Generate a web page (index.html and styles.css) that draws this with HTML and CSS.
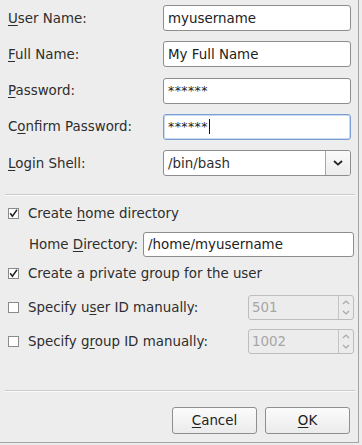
FILE: index.html
```html
<!DOCTYPE html>
<html lang="en">
<head>
	<meta charset="UTF-8">
	<title>Add User</title>
	<link rel="stylesheet" href="styles.css">
</head>
<body>
	<div class="dialog">
		<div class="fields">
			<label class="lbl"><u>U</u>ser Name:</label>
			<div class="entry">myusername</div>
			<label class="lbl"><u>F</u>ull Name:</label>
			<div class="entry">My Full Name</div>
			<label class="lbl"><u>P</u>assword:</label>
			<div class="entry pw">******</div>
			<label class="lbl">C<u>o</u>nfirm Password:</label>
			<div class="entry pw focus">******<span class="caret"></span></div>
			<label class="lbl"><u>L</u>ogin Shell:</label>
			<div class="combo">
				<span class="combo-text">/bin/bash</span>
				<span class="combo-btn">
					<svg width="10" height="6" viewBox="0 0 10 6"><path d="M1 1 L5 4.6 L9 1" fill="none" stroke="#222" stroke-width="1.8"/></svg>
				</span>
			</div>
		</div>

		<div class="sep"></div>

		<div class="options">
			<div class="check-row first">
				<span class="check"><svg width="11" height="11" viewBox="0 0 11 11"><path d="M2.2 5.2 L4.4 8.2 L9 1.8" fill="none" stroke="#222" stroke-width="1.5"/></svg></span>
				<span>Create <u>h</u>ome directory</span>
			</div>
			<div class="home-row">
				<span class="home-lbl">Home <u>D</u>irectory:</span>
				<div class="entry">/home/myusername</div>
			</div>
			<div class="check-row group">
				<span class="check"><svg width="11" height="11" viewBox="0 0 11 11"><path d="M2.2 5.2 L4.4 8.2 L9 1.8" fill="none" stroke="#222" stroke-width="1.5"/></svg></span>
				<span>Create a private <u>g</u>roup for the user</span>
			</div>
			<div class="spin-row uid">
				<div class="check-row">
					<span class="check"></span>
					<span>Specify u<u>s</u>er ID manually:</span>
				</div>
				<div class="spin">
					<span class="spin-text">501</span>
					<span class="spin-btns">
						<svg width="8" height="5" viewBox="0 0 8 5"><path d="M1 4 L4 1 L7 4" fill="none" stroke="#a8a8a8" stroke-width="1.2"/></svg>
						<svg width="8" height="5" viewBox="0 0 8 5"><path d="M1 1 L4 4 L7 1" fill="none" stroke="#a8a8a8" stroke-width="1.2"/></svg>
					</span>
				</div>
			</div>
			<div class="spin-row gid">
				<div class="check-row">
					<span class="check"></span>
					<span>Specify g<u>r</u>oup ID manually:</span>
				</div>
				<div class="spin">
					<span class="spin-text">1002</span>
					<span class="spin-btns">
						<svg width="8" height="5" viewBox="0 0 8 5"><path d="M1 4 L4 1 L7 4" fill="none" stroke="#a8a8a8" stroke-width="1.2"/></svg>
						<svg width="8" height="5" viewBox="0 0 8 5"><path d="M1 1 L4 4 L7 1" fill="none" stroke="#a8a8a8" stroke-width="1.2"/></svg>
					</span>
				</div>
			</div>
		</div>

		<div class="sep low"></div>

		<div class="buttons">
			<button class="btn"><u>C</u>ancel</button>
			<button class="btn"><u>O</u>K</button>
		</div>
	</div>
</body>
</html>
```

FILE: styles.css
```css
body {
	margin: 0;
	background: #ededed;
	font-family: "DejaVu Sans", sans-serif;
	font-size: 13.4px;
	color: #2e2e2e;
}
u {
	text-underline-offset: 2px;
}
.dialog {
	width: 359px;
	height: 443px;
	box-sizing: border-box;
	padding-top: 5px;
	border-right: 1px solid #a4a4a4;
	border-bottom: 1px solid #a4a4a4;
}
.fields {
	display: grid;
	grid-template-columns: 155px 1fr;
	grid-auto-rows: 26px;
	row-gap: 10.25px;
	padding: 0 7px 0 8px;
	align-items: center;
}
.entry {
	box-sizing: border-box;
	height: 100%;
	display: flex;
	align-items: center;
	padding-left: 4px;
	background: #fff;
	border: 1px solid #8d8d8d;
	border-radius: 3px;
	color: #222;
}
.entry.pw {
	letter-spacing: 0.4px;
	font-size: 12.5px;
}
.entry.focus {
	border-color: #7b9ed2;
	box-shadow: inset 0 0 0 1px #c9d9ef;
}
.caret {
	width: 1px;
	height: 15px;
	background: #111;
	margin-left: 1px;
}
.combo {
	box-sizing: border-box;
	height: 100%;
	display: flex;
	background: #fff;
	border: 1px solid #8d8d8d;
	border-radius: 3px;
}
.combo-text {
	flex: 1;
	display: flex;
	align-items: center;
	padding-left: 4px;
}
.combo-btn {
	width: 24px;
	display: flex;
	align-items: center;
	justify-content: center;
	border-left: 1px solid #a8a8a8;
	background: linear-gradient(#fafafa, #ececec);
	border-radius: 0 2px 2px 0;
}
.sep {
	margin: 18px 3px 0 5px;
	height: 1px;
	background: #cbcbcb;
	border-bottom: 1px solid #fbfbfb;
}
.sep.low {
	margin-top: 36px;
}
.options {
	padding: 0 4px 0 8px;
}
.check-row {
	height: 20px;
	display: flex;
	align-items: center;
	gap: 9px;
}
.check-row.first {
	margin-top: 7px;
}
.check-row.group {
	margin-top: 6px;
}
.check {
	box-sizing: border-box;
	width: 11px;
	height: 11px;
	border: 1px solid #8a8a8a;
	background: #fff;
	display: flex;
	align-items: center;
	justify-content: center;
}
.check svg {
	flex: none;
}
.home-row {
	margin-top: 9px;
	height: 25px;
	display: grid;
	grid-template-columns: 114px 1fr;
	align-items: center;
	padding-left: 21px;
}
.spin-row {
	height: 25px;
	display: flex;
	justify-content: space-between;
	align-items: center;
}
.spin-row.uid {
	margin-top: 12px;
}
.spin-row.gid {
	margin-top: 9px;
}
.spin {
	box-sizing: border-box;
	width: 106px;
	height: 25px;
	display: flex;
	border: 1px solid #bdbdbd;
	border-radius: 3px;
	background: #ececec;
	color: #a6a6a6;
}
.spin-text {
	flex: 1;
	display: flex;
	align-items: center;
	padding-left: 3px;
}
.spin-btns {
	width: 14px;
	border-left: 1px solid #c4c4c4;
	display: flex;
	flex-direction: column;
	align-items: center;
	justify-content: space-around;
	padding: 2px 0;
}
.buttons {
	margin-top: 15px;
	display: flex;
	justify-content: flex-end;
	gap: 8px;
	padding-right: 8px;
}
.btn {
	width: 85px;
	height: 27px;
	font-family: inherit;
	font-size: 13.4px;
	color: #222;
	border: 1px solid #8f8f8f;
	border-radius: 3px;
	background: linear-gradient(#fbfbfb, #ebebeb);
	padding: 0;
}
```
